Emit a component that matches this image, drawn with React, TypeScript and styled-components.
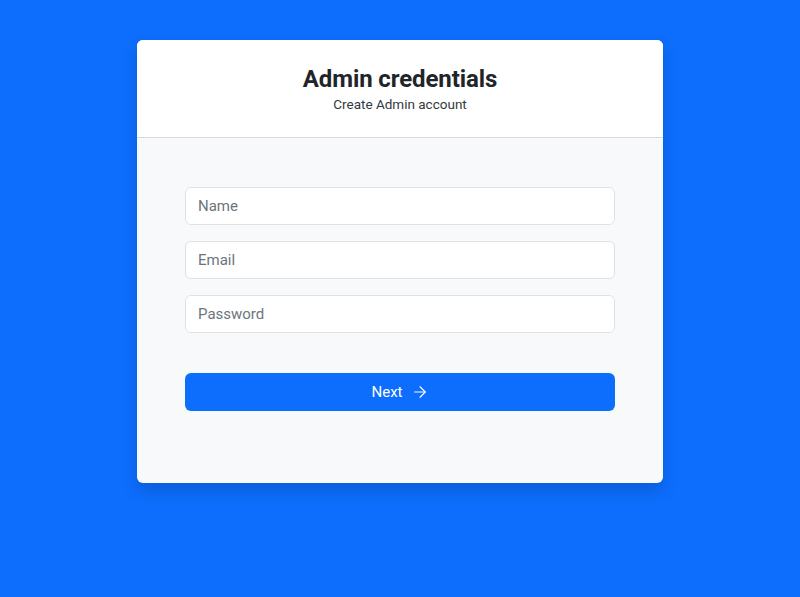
import React from "react";
import styled, { createGlobalStyle } from "styled-components";
import { ArrowRight } from "lucide-react";

const GlobalStyle = createGlobalStyle`
  html, body {
    margin: 0;
    padding: 0;
    background: #0d6efd;
    font-family: Roboto, "Liberation Sans", sans-serif;
  }
  * {
    box-sizing: border-box;
  }
`;

export const Page = styled.div`
  min-height: 597px;
  display: flex;
  justify-content: center;
  align-items: flex-start;
  padding-top: 40px;
`;

export const Card = styled.div`
  width: 526px;
  border-radius: 6px;
  overflow: hidden;
  background-color: #f8f9fa;
  box-shadow: 0 8px 16px rgba(0, 0, 0, 0.15);
`;

export const Header = styled.div`
  background-color: #fff;
  border-bottom: 1px solid #d6d8db;
  text-align: center;
  padding: 24px 16px 0;
  height: 98px;
`;

export const Title = styled.h1`
  margin: 0;
  font-size: 24px;
  font-weight: 700;
  color: #212529;
  line-height: 30px;
  letter-spacing: -0.1px;
`;

export const Subtitle = styled.div`
  margin-top: 2px;
  font-size: 13.5px;
  color: #343a40;
  line-height: 16px;
`;

export const Body = styled.form`
  padding: 49px 48px 72px;
  display: flex;
  flex-direction: column;
  gap: 16px;
`;

export const Input = styled.input`
  height: 38px;
  width: 100%;
  border: 1px solid #dee2e6;
  border-radius: 6px;
  background: #fff;
  padding: 0 12px;
  font-family: inherit;
  font-size: 15px;
  color: #212529;
  outline: none;
  &::placeholder {
    color: #6c757d;
  }
`;

export const Button = styled.button`
  margin-top: 24px;
  height: 38px;
  width: 100%;
  border: none;
  border-radius: 6px;
  background-color: #0d6efd;
  color: #fff;
  font-family: inherit;
  font-size: 15px;
  display: flex;
  align-items: center;
  justify-content: center;
  gap: 8px;
  cursor: pointer;
`;

const App = () => {
  return (
    <>
      <GlobalStyle />
      <Page>
        <Card>
          <Header>
            <Title>Admin credentials</Title>
            <Subtitle>Create Admin account</Subtitle>
          </Header>
          <Body onSubmit={(e) => e.preventDefault()}>
            <Input type="text" placeholder="Name" />
            <Input type="email" placeholder="Email" />
            <Input type="password" placeholder="Password" />
            <Button type="submit">
              Next <ArrowRight size={18} strokeWidth={1.5} />
            </Button>
          </Body>
        </Card>
      </Page>
    </>
  );
};

export default App;
